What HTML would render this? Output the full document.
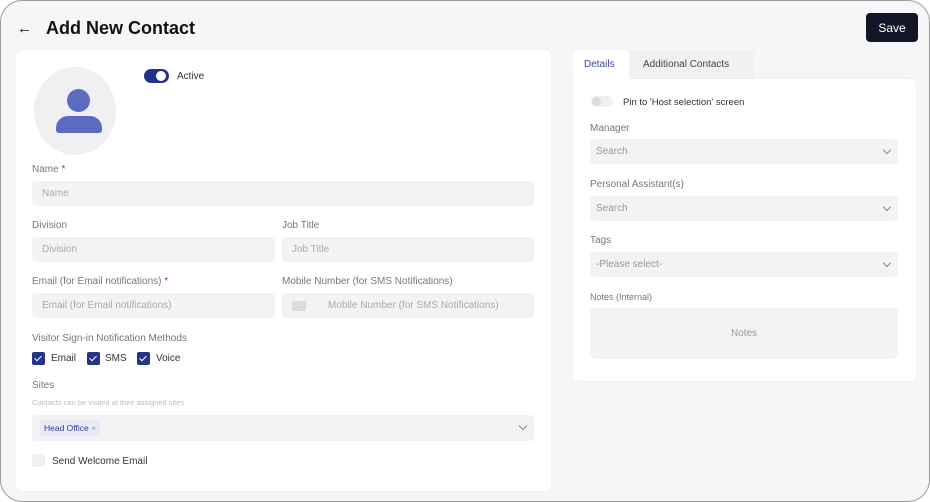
<!DOCTYPE html>
<html><head><style>
*{box-sizing:border-box;margin:0;padding:0}
body{width:930px;height:502px;overflow:hidden;font-family:"Liberation Sans",sans-serif;background:#fff}
.frame{position:absolute;left:0;top:0;width:930px;height:502px;border:1px solid #9a9a9a;border-radius:22px;background:#f6f6f8;overflow:hidden}
.a{position:absolute}
.card{position:absolute;background:#fff;border-radius:6px;box-shadow:0 0 2px rgba(0,0,0,.06)}
.lbl{position:absolute;font-size:10px;color:#777}
.in{position:absolute;background:#f3f3f5;border-radius:4px;font-size:10px;color:#aaa;padding-left:10px;display:flex;align-items:center}
.chev{position:absolute;right:8px;top:8px;width:6px;height:6px;border-right:1.2px solid #888;border-bottom:1.2px solid #888;transform:rotate(45deg)}
.cb{position:absolute;width:13px;height:13px;background:#26338a;border-radius:2px}
.cb:after{content:"";position:absolute;left:4px;top:2px;width:3px;height:6px;border-right:1.5px solid #fff;border-bottom:1.5px solid #fff;transform:rotate(45deg)}
.t{position:absolute;font-size:10px;color:#333}
</style></head><body>
<div class="frame">
<div class="a" style="left:16px;top:19px;font-size:15px;color:#111">&#8592;</div>
<div class="a" style="left:45px;top:17px;font-size:18px;font-weight:bold;color:#111">Add New Contact</div>
<div class="a" style="left:865px;top:12px;width:52px;height:29px;background:#121628;border-radius:4px;color:#fff;font-size:12px;display:flex;align-items:center;justify-content:center">Save</div>

<div class="card" style="left:15px;top:49px;width:535px;height:441px"></div>
<div class="a" style="left:33px;top:66px;width:82px;height:88px;border-radius:50%;background:#f0f0f2"></div>
<div class="a" style="left:66px;top:88px;width:23px;height:23px;border-radius:50%;background:#5c6bc0"></div>
<div class="a" style="left:55px;top:115px;width:46px;height:17px;border-radius:12px 12px 3px 3px;background:#5c6bc0"></div>
<div class="a" style="left:143px;top:68px;width:25px;height:14px;border-radius:7px;background:#26338a"></div>
<div class="a" style="left:155px;top:70px;width:10px;height:10px;border-radius:50%;background:#fff"></div>
<div class="t" style="left:176px;top:70px;font-size:10px">Active</div>

<div class="lbl" style="left:31px;top:163px">Name <span style="color:#b33">*</span></div>
<div class="in" style="left:31px;top:180px;width:502px;height:25px">Name</div>
<div class="lbl" style="left:31px;top:219px">Division</div>
<div class="in" style="left:31px;top:236px;width:243px;height:25px">Division</div>
<div class="lbl" style="left:281px;top:219px">Job Title</div>
<div class="in" style="left:281px;top:236px;width:252px;height:25px">Job Title</div>
<div class="lbl" style="left:31px;top:275px">Email (for Email notifications) <span style="color:#b33">*</span></div>
<div class="in" style="left:31px;top:292px;width:243px;height:25px">Email (for Email notifications)</div>
<div class="lbl" style="left:281px;top:275px">Mobile Number (for SMS Notifications)</div>
<div class="in" style="left:281px;top:292px;width:252px;height:25px"><span style="display:inline-block;width:14px;height:10px;background:#ddd;margin-right:22px"></span>Mobile Number (for SMS Notifications)</div>
<div class="lbl" style="left:31px;top:332px">Visitor Sign-in Notification Methods</div>
<div class="cb" style="left:31px;top:351px"></div><div class="t" style="left:50px;top:352px">Email</div>
<div class="cb" style="left:86px;top:351px"></div><div class="t" style="left:104px;top:352px">SMS</div>
<div class="cb" style="left:136px;top:351px"></div><div class="t" style="left:155px;top:352px">Voice</div>
<div class="lbl" style="left:31px;top:379px">Sites</div>
<div class="lbl" style="left:31px;top:397px;font-size:7.5px;color:#bbb">Contacts can be visited at their assigned sites</div>
<div class="in" style="left:31px;top:414px;width:502px;height:26px;padding-left:8px"><span style="background:#e8ebf7;color:#2a3a9a;font-size:8.5px;padding:3px 4px;border-radius:2px">Head Office <span style="color:#999">×</span></span><div class="chev"></div></div>
<div class="a" style="left:31px;top:453px;width:13px;height:13px;background:#f0f0f2;border-radius:2px"></div>
<div class="t" style="left:51px;top:455px">Send Welcome Email</div>

<div class="a" style="left:572px;top:49px;width:56px;height:30px;background:#fff;border-radius:4px 4px 0 0;font-size:10px;color:#3a4aa0;padding:9px 0 0 11px">Details</div>
<div class="a" style="left:629px;top:49px;width:124px;height:29px;background:#f1f1f3;border-radius:4px 4px 0 0;font-size:10px;color:#444;padding:9px 0 0 13px">Additional Contacts</div>
<div class="card" style="left:572px;top:78px;width:343px;height:302px;border-radius:0 6px 6px 6px"></div>
<div class="a" style="left:590px;top:95px;width:22px;height:11px;border-radius:6px;background:#f0f0f2"></div>
<div class="a" style="left:591px;top:96px;width:9px;height:9px;border-radius:50%;background:#ddd"></div>
<div class="t" style="left:622px;top:96px;font-size:9.5px">Pin to 'Host selection' screen</div>
<div class="lbl" style="left:589px;top:122px">Manager</div>
<div class="in" style="left:589px;top:138px;width:308px;height:25px;padding-left:6px;color:#999">Search<div class="chev"></div></div>
<div class="lbl" style="left:589px;top:178px">Personal Assistant(s)</div>
<div class="in" style="left:589px;top:195px;width:308px;height:25px;padding-left:6px;color:#999">Search<div class="chev"></div></div>
<div class="lbl" style="left:589px;top:234px">Tags</div>
<div class="in" style="left:589px;top:251px;width:308px;height:25px;padding-left:6px;color:#999">-Please select-<div class="chev"></div></div>
<div class="lbl" style="left:589px;top:291px;font-size:9px">Notes (Internal)</div>
<div class="in" style="left:589px;top:307px;width:308px;height:51px;justify-content:center;padding:0;color:#999">Notes</div>
</div>
</body></html>
